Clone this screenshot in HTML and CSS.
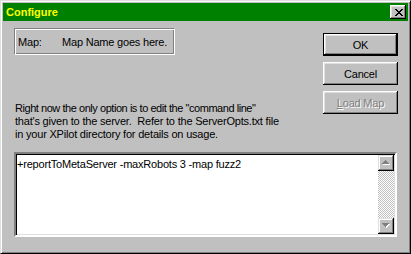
FILE: index.html
```html
<!DOCTYPE html>
<html>
<head>
    <meta charset="UTF-8">
    <title>Configure</title>
    <link rel="stylesheet" href="styles.css">
</head>
<body>
    <div class="window">
        <div class="titlebar">
            <span class="title">Configure</span>
            <div class="close-btn">
                <svg width="8" height="7" viewBox="0 0 8 7" shape-rendering="crispEdges">
                    <path d="M0 0h2v1h-2zM6 0h2v1h-2zM1 1h2v1h-2zM5 1h2v1h-2zM2 2h4v1h-4zM3 3h2v1h-2zM2 4h4v1h-4zM1 5h2v1h-2zM5 5h2v1h-2zM0 6h2v1h-2zM6 6h2v1h-2z" fill="#000"/>
                </svg>
            </div>
        </div>

        <div class="dialog-body">
            <div class="top-row">
                <div class="left-col">
                    <div class="map-box">
                        <span class="map-label">Map:</span>
                        <span>Map Name goes here.</span>
                    </div>
                    <p class="note">
                        <span class="tight">Right now the only option is to edit the "command line"</span><br>
                        that's given to the server.&nbsp; Refer to the ServerOpts.txt file<br>
                        in your XPilot directory for details on usage.
                    </p>
                </div>
                <div class="button-col">
                    <div class="btn default"><span>OK</span></div>
                    <div class="btn"><span>Cancel</span></div>
                    <div class="btn disabled"><span><u>L</u>oad Map</span></div>
                </div>
            </div>

            <div class="cmd-box">
                <div class="cmd-text">+reportToMetaServer -maxRobots 3 -map fuzz2</div>
                <div class="scrollbar">
                    <div class="sb-btn">
                        <svg width="8" height="6" viewBox="0 0 8 6" shape-rendering="crispEdges">
                            <path d="M4 1h1v1h-1zM3 2h3v1h-3zM2 3h5v1h-5zM1 4h7v1h-7z" fill="#fff"/>
                            <path d="M3 0h1v1h-1zM2 1h3v1h-3zM1 2h5v1h-5zM0 3h7v1h-7z" fill="#808080"/>
                        </svg>
                    </div>
                    <div class="sb-track"></div>
                    <div class="sb-btn">
                        <svg width="8" height="6" viewBox="0 0 8 6" shape-rendering="crispEdges">
                            <path d="M1 1h7v1h-7zM2 2h5v1h-5zM3 3h3v1h-3zM4 4h1v1h-1z" fill="#fff"/>
                            <path d="M0 0h7v1h-7zM1 1h5v1h-5zM2 2h3v1h-3zM3 3h1v1h-1z" fill="#808080"/>
                        </svg>
                    </div>
                </div>
            </div>
        </div>
    </div>
</body>
</html>
```

FILE: styles.css
```css
body {
    margin: 0;
    background: #c0c0c0;
    font-family: "Liberation Sans", Arial, sans-serif;
    font-size: 11px;
    letter-spacing: -0.2px;
    color: #000;
}
.window {
    width: 411px;
    height: 254px;
    box-sizing: border-box;
    padding: 2px;
    background: #c0c0c0;
    border: 1px solid;
    border-color: #dfdfdf #000 #000 #dfdfdf;
    box-shadow: inset 1px 1px #fff, inset -1px -1px #808080;
}
.titlebar {
    height: 18px;
    display: flex;
    align-items: center;
    justify-content: space-between;
    padding: 0 2px 0 3px;
    background: #008000;
}
.title {
    color: #ffff00;
    font-weight: bold;
    font-size: 11px;
    letter-spacing: 0;
}
.close-btn {
    width: 16px;
    height: 14px;
    box-sizing: border-box;
    display: flex;
    align-items: center;
    justify-content: center;
    padding-left: 1px;
    background: #c0c0c0;
    box-shadow: inset -1px -1px #000, inset 1px 1px #fff, inset -2px -2px #808080, inset 2px 2px #dfdfdf;
}
.dialog-body {
    padding: 7px 10px 0 11px;
}
.top-row {
    display: flex;
    justify-content: space-between;
}
.map-box {
    width: 161px;
    height: 27px;
    box-sizing: border-box;
    display: flex;
    align-items: center;
    padding-left: 3px;
    border: 1px solid;
    border-color: #808080 #fff #fff #808080;
    box-shadow: inset 1px 1px #fff, inset -1px -1px #808080;
}
.map-label {
    width: 44px;
}
.note {
    margin: 47px 0 0 1px;
    line-height: 13px;
}
.note .tight {
    letter-spacing: -0.45px;
}
.button-col {
    display: flex;
    flex-direction: column;
    gap: 6px;
    padding-top: 5px;
}
.btn {
    width: 75px;
    height: 23px;
    box-sizing: border-box;
    display: flex;
    align-items: center;
    justify-content: center;
    background: #c0c0c0;
    box-shadow: inset -1px -1px #000, inset 1px 1px #fff, inset -2px -2px #808080, inset 2px 2px #dfdfdf;
}
.btn.default {
    border: 1px solid #000;
}
.btn.disabled {
    color: #808080;
    text-shadow: 1px 1px #fff;
}
.cmd-box {
    display: flex;
    width: 383px;
    height: 85px;
    box-sizing: border-box;
    margin-top: 11px;
    background: #fff;
    border: 2px solid;
    border-color: #808080 #fff #fff #808080;
    box-shadow: inset 1px 1px #000, inset -1px -1px #dfdfdf;
    padding: 2px 2px 2px 0;
}
.cmd-text {
    flex: 1;
    padding: 2px 0 0 1px;
}
.scrollbar {
    width: 16px;
    display: flex;
    flex-direction: column;
    margin: -1px -1px -1px 0;
}
.sb-btn {
    height: 16px;
    display: flex;
    align-items: center;
    justify-content: center;
    background: #c0c0c0;
    box-shadow: inset -1px -1px #000, inset 1px 1px #dfdfdf, inset -2px -2px #808080, inset 2px 2px #fff;
}
.sb-track {
    flex: 1;
    background: repeating-conic-gradient(#c0c0c0 0 25%, #fff 0 50%) 0 0 / 2px 2px;
}
```
